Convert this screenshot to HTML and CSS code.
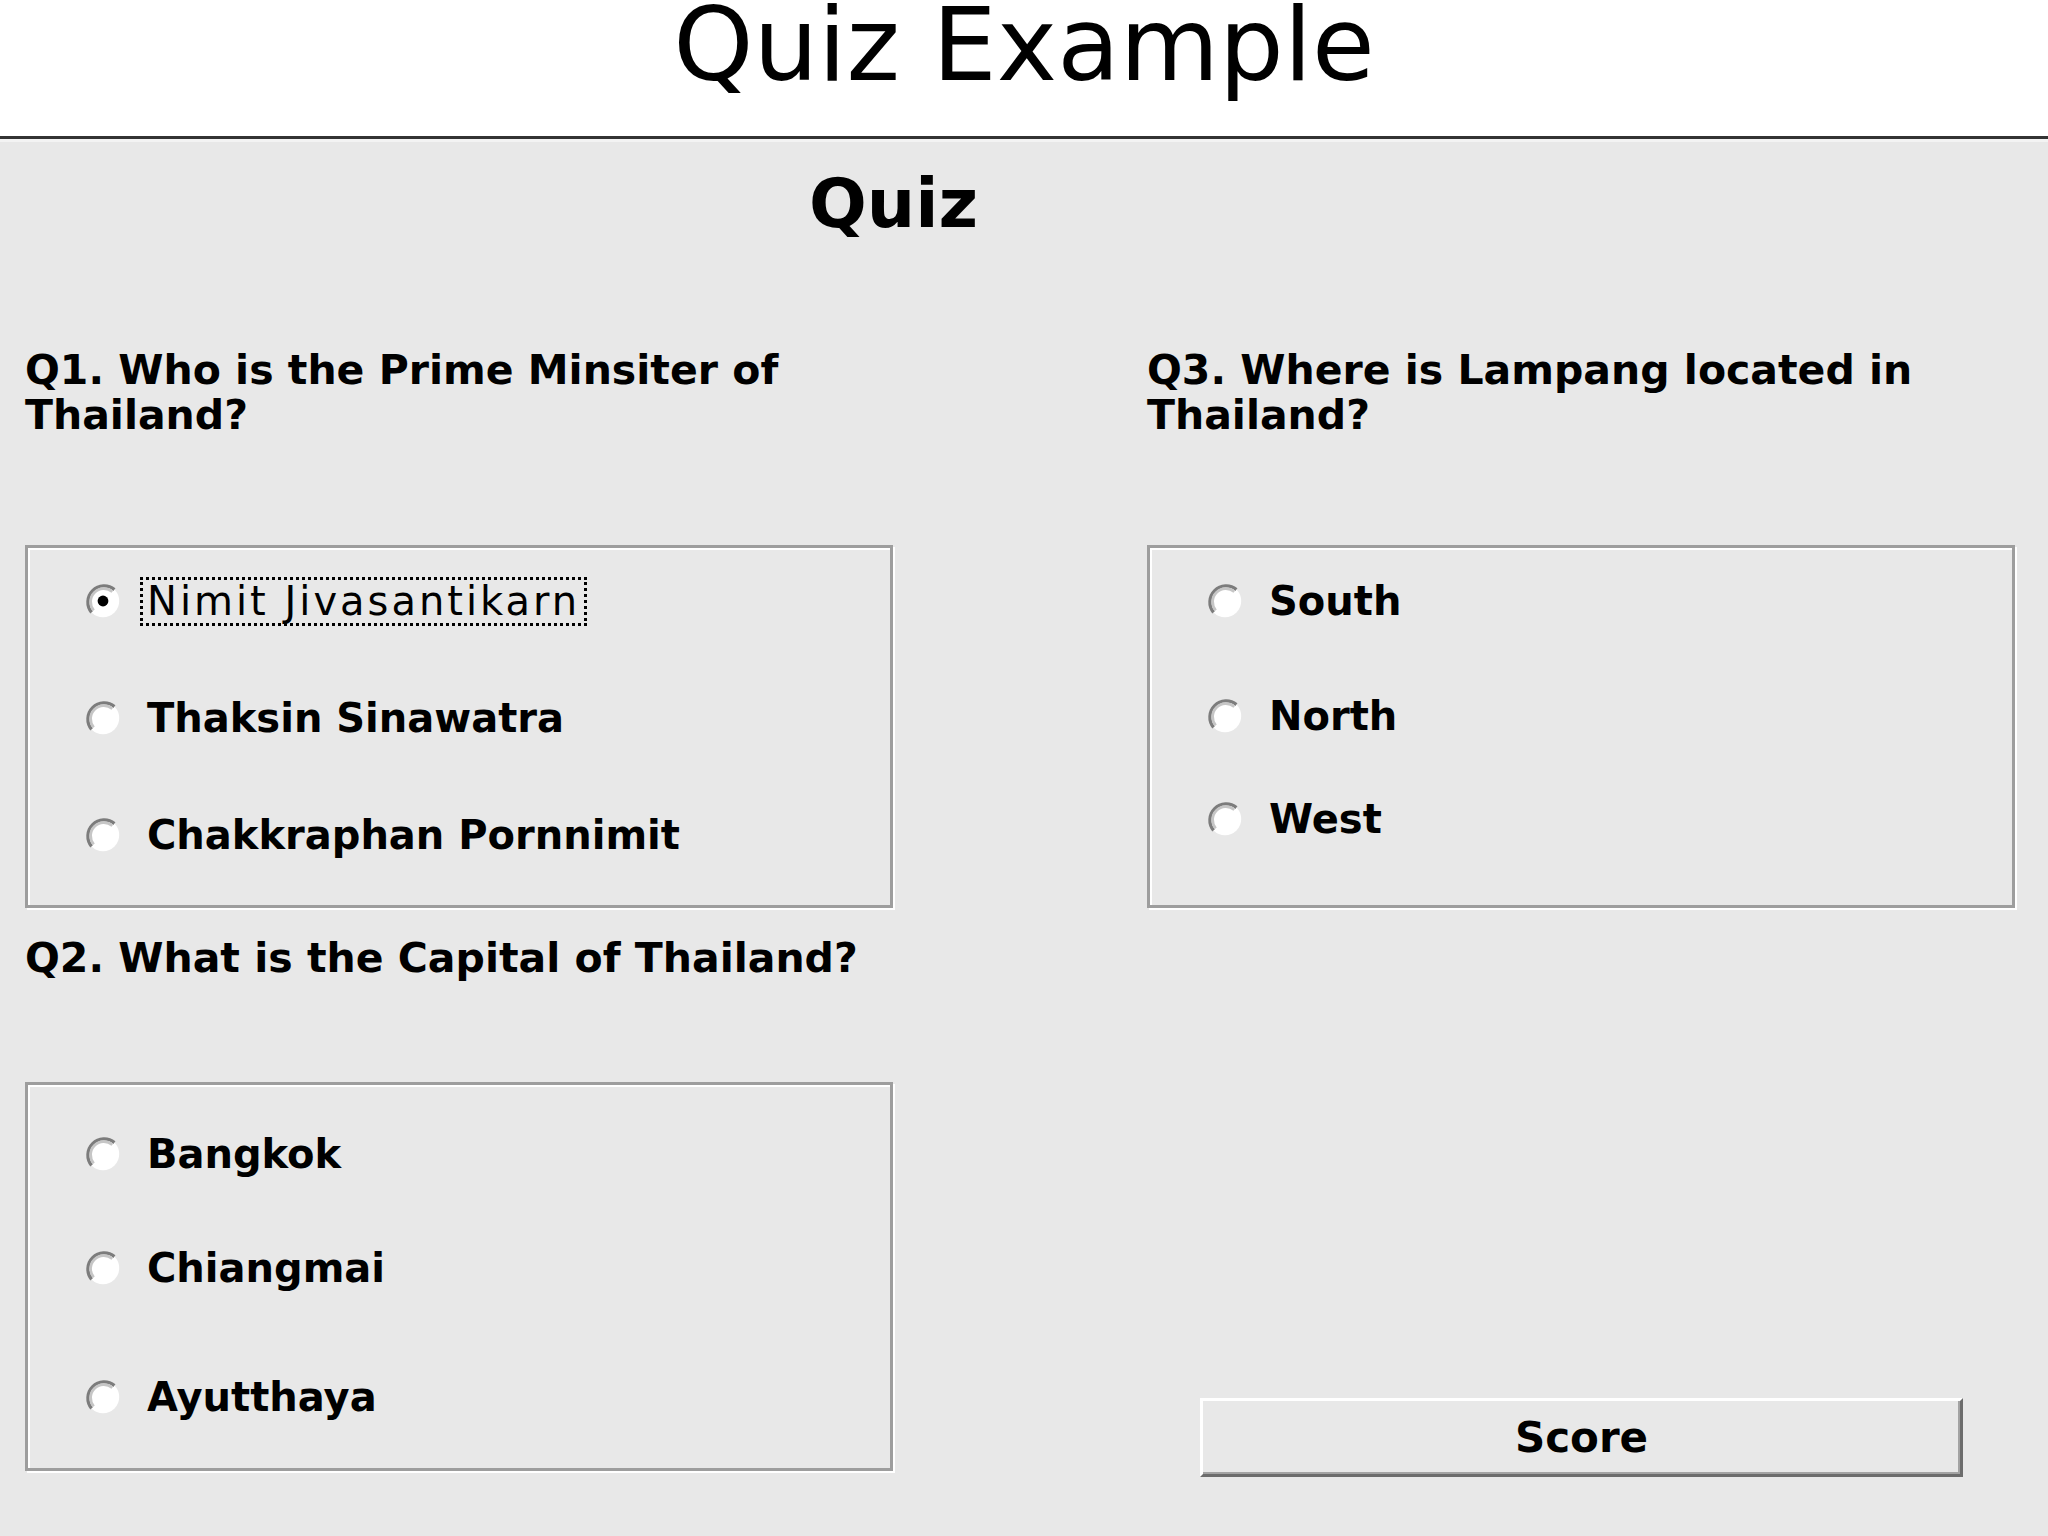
FILE: index.html
```html
<!DOCTYPE html>
<html lang="en">
<head>
    <meta charset="UTF-8">
    <title>Quiz Example</title>
    <link rel="stylesheet" href="styles.css">
</head>
<body>
    <header class="page-head">
        <h1 class="page-title">Quiz Example</h1>
    </header>

    <main class="applet">
        <h2 class="quiz-title">Quiz</h2>

        <div class="columns">
            <div class="col">
                <p class="question">Q1. Who is the Prime Minsiter of Thailand?</p>
                <div class="choices q1">
                    <label class="choice">
                        <svg class="radio" viewBox="0 0 12 12"><circle cx="6" cy="6" r="5.4" fill="#fff"/><path d="M2.2 9.8A5.4 5.4 0 0 1 9.8 2.2" fill="none" stroke="#7c7c7c" stroke-width="1.1"/><path d="M2.9 9.1A4.4 4.4 0 0 1 9.1 2.9" fill="none" stroke="#c6c6c6" stroke-width="0.9"/><circle cx="6" cy="6" r="1.8" fill="#000"/></svg>
                        <span class="choice-text focused">Nimit Jivasantikarn</span>
                    </label>
                    <label class="choice">
                        <svg class="radio" viewBox="0 0 12 12"><circle cx="6" cy="6" r="5.4" fill="#fff"/><path d="M2.2 9.8A5.4 5.4 0 0 1 9.8 2.2" fill="none" stroke="#7c7c7c" stroke-width="1.1"/><path d="M2.9 9.1A4.4 4.4 0 0 1 9.1 2.9" fill="none" stroke="#c6c6c6" stroke-width="0.9"/></svg>
                        <span class="choice-text">Thaksin Sinawatra</span>
                    </label>
                    <label class="choice">
                        <svg class="radio" viewBox="0 0 12 12"><circle cx="6" cy="6" r="5.4" fill="#fff"/><path d="M2.2 9.8A5.4 5.4 0 0 1 9.8 2.2" fill="none" stroke="#7c7c7c" stroke-width="1.1"/><path d="M2.9 9.1A4.4 4.4 0 0 1 9.1 2.9" fill="none" stroke="#c6c6c6" stroke-width="0.9"/></svg>
                        <span class="choice-text">Chakkraphan Pornnimit</span>
                    </label>
                </div>

                <p class="question q2-text">Q2. What is the Capital of Thailand?</p>
                <div class="choices q2">
                    <label class="choice">
                        <svg class="radio" viewBox="0 0 12 12"><circle cx="6" cy="6" r="5.4" fill="#fff"/><path d="M2.2 9.8A5.4 5.4 0 0 1 9.8 2.2" fill="none" stroke="#7c7c7c" stroke-width="1.1"/><path d="M2.9 9.1A4.4 4.4 0 0 1 9.1 2.9" fill="none" stroke="#c6c6c6" stroke-width="0.9"/></svg>
                        <span class="choice-text">Bangkok</span>
                    </label>
                    <label class="choice">
                        <svg class="radio" viewBox="0 0 12 12"><circle cx="6" cy="6" r="5.4" fill="#fff"/><path d="M2.2 9.8A5.4 5.4 0 0 1 9.8 2.2" fill="none" stroke="#7c7c7c" stroke-width="1.1"/><path d="M2.9 9.1A4.4 4.4 0 0 1 9.1 2.9" fill="none" stroke="#c6c6c6" stroke-width="0.9"/></svg>
                        <span class="choice-text">Chiangmai</span>
                    </label>
                    <label class="choice">
                        <svg class="radio" viewBox="0 0 12 12"><circle cx="6" cy="6" r="5.4" fill="#fff"/><path d="M2.2 9.8A5.4 5.4 0 0 1 9.8 2.2" fill="none" stroke="#7c7c7c" stroke-width="1.1"/><path d="M2.9 9.1A4.4 4.4 0 0 1 9.1 2.9" fill="none" stroke="#c6c6c6" stroke-width="0.9"/></svg>
                        <span class="choice-text">Ayutthaya</span>
                    </label>
                </div>
            </div>

            <div class="col">
                <p class="question">Q3. Where is Lampang located in Thailand?</p>
                <div class="choices q3">
                    <label class="choice">
                        <svg class="radio" viewBox="0 0 12 12"><circle cx="6" cy="6" r="5.4" fill="#fff"/><path d="M2.2 9.8A5.4 5.4 0 0 1 9.8 2.2" fill="none" stroke="#7c7c7c" stroke-width="1.1"/><path d="M2.9 9.1A4.4 4.4 0 0 1 9.1 2.9" fill="none" stroke="#c6c6c6" stroke-width="0.9"/></svg>
                        <span class="choice-text">South</span>
                    </label>
                    <label class="choice">
                        <svg class="radio" viewBox="0 0 12 12"><circle cx="6" cy="6" r="5.4" fill="#fff"/><path d="M2.2 9.8A5.4 5.4 0 0 1 9.8 2.2" fill="none" stroke="#7c7c7c" stroke-width="1.1"/><path d="M2.9 9.1A4.4 4.4 0 0 1 9.1 2.9" fill="none" stroke="#c6c6c6" stroke-width="0.9"/></svg>
                        <span class="choice-text">North</span>
                    </label>
                    <label class="choice">
                        <svg class="radio" viewBox="0 0 12 12"><circle cx="6" cy="6" r="5.4" fill="#fff"/><path d="M2.2 9.8A5.4 5.4 0 0 1 9.8 2.2" fill="none" stroke="#7c7c7c" stroke-width="1.1"/><path d="M2.9 9.1A4.4 4.4 0 0 1 9.1 2.9" fill="none" stroke="#c6c6c6" stroke-width="0.9"/></svg>
                        <span class="choice-text">West</span>
                    </label>
                </div>

                <button class="score-btn">Score</button>
            </div>
        </div>
    </main>
</body>
</html>
```

FILE: styles.css
```css
* {
    margin: 0;
    padding: 0;
    box-sizing: border-box;
}
body {
    font-family: "DejaVu Sans", Verdana, sans-serif;
    background-color: #e8e8e8;
    color: #000;
}
.page-head {
    background-color: #fff;
    height: 139px;
    border-bottom: 3px solid #333;
    box-shadow: 0 3px 0 #f3f3f3;
    text-align: center;
}
.page-title {
    font-size: 102px;
    font-weight: normal;
    line-height: 90px;
}
.applet {
    padding-top: 27px;
}
.quiz-title {
    font-size: 68px;
    font-weight: bold;
    line-height: 76px;
    padding-left: 809px;
}
.columns {
    display: flex;
    gap: 254px;
    padding-left: 25px;
    margin-top: 106px;
}
.col {
    width: 868px;
    display: flex;
    flex-direction: column;
}
.question {
    font-size: 41px;
    font-weight: bold;
    line-height: 45px;
}
.q2-text {
    margin-top: 28px;
}

/* etched group boxes */
.choices {
    margin-top: 107px;
    height: 363px;
    border: 3px solid #9d9d9d;
    box-shadow: inset 2px 2px 0 #fff, 2px 2px 0 #fff;
    display: flex;
    flex-direction: column;
    gap: 67px;
    padding-top: 28px;
    padding-left: 57px;
}
.choices.q2 {
    margin-top: 101px;
    height: 389px;
    padding-top: 44px;
    gap: 64px;
}
.choices.q2 .choice:last-child {
    margin-top: 15px;
}
.choices.q3 {
    gap: 65px;
}
.choices.q3 .choice:last-child {
    margin-top: -12px;
}
.choice {
    display: flex;
    align-items: center;
    height: 50px;
}
.radio {
    width: 36px;
    height: 36px;
    flex-shrink: 0;
    margin-right: 19px;
}
.choice-text {
    font-size: 40px;
    font-weight: bold;
    line-height: 43px;
    padding: 0 4px;
    border: 3px dotted transparent;
}
.choice-text.focused {
    font-weight: normal;
    letter-spacing: 3px;
    border-color: #000;
}
.score-btn {
    margin-top: 490px;
    margin-left: 53px;
    width: 763px;
    height: 79px;
    background-color: #e8e8e8;
    border-style: solid;
    border-width: 3px;
    border-color: #fff #6c6c6c #6c6c6c #fff;
    box-shadow: inset -2px -2px 0 #a3a3a3;
    font-family: "DejaVu Sans", Verdana, sans-serif;
    font-size: 42px;
    font-weight: bold;
    color: #000;
}
```
